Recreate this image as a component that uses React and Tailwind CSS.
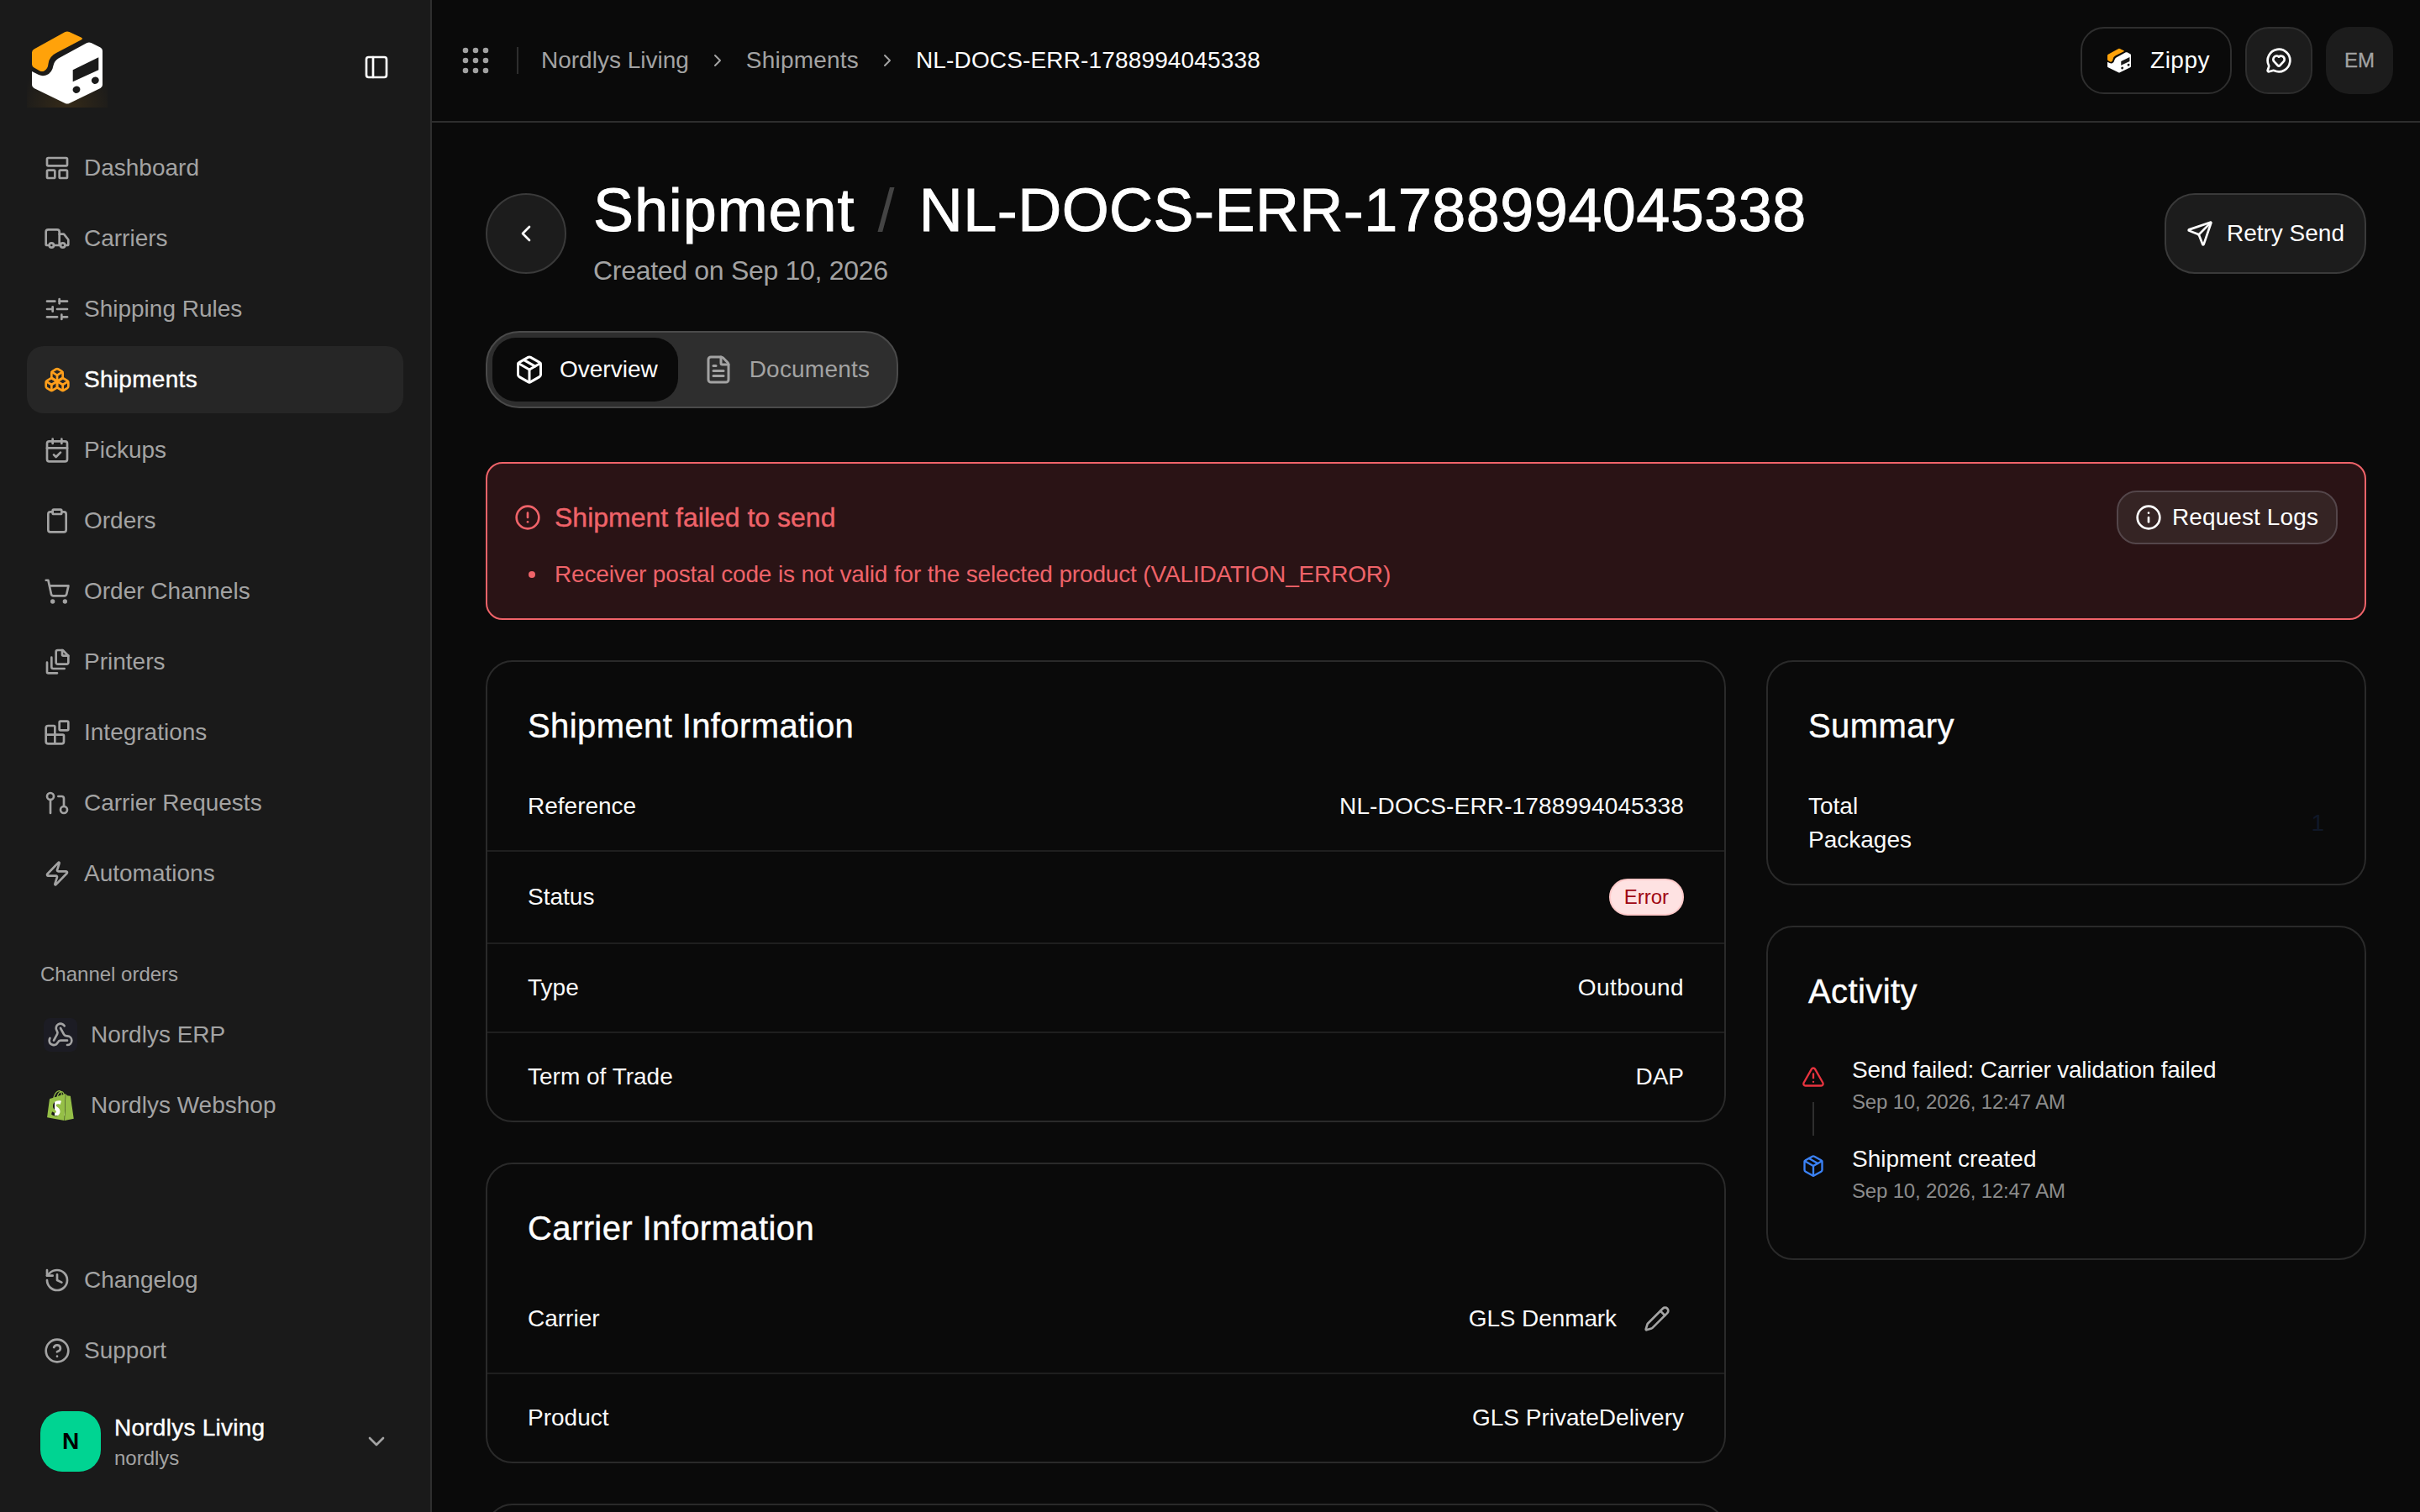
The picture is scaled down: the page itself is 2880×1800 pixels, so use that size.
import {
  LayoutPanelTop, Truck, SlidersHorizontal, Boxes, CalendarCheck, Clipboard, ShoppingCart, Blocks,
  GitPullRequest, Zap, Webhook, History, CircleHelp, ChevronDown, ChevronRight, ChevronLeft, PanelLeft,
  MessageCircleHeart, Send, Package, FileText, CircleAlert, Info, Pencil, TriangleAlert,
} from 'lucide-react';
import { SiShopify } from 'react-icons/si';

function Logo({ className, glow }) {
  return (
    <svg viewBox="0 0 96 96" className={className}>
      {glow && (
        <>
          <defs>
            <radialGradient id="logo-glow" cx="50%" cy="100%" r="60%">
              <stop offset="0%" stopColor="#ffa20a" stopOpacity="0.12" />
              <stop offset="100%" stopColor="#ffa20a" stopOpacity="0" />
            </radialGradient>
          </defs>
          <rect width="96" height="96" fill="url(#logo-glow)" />
        </>
      )}
      <path d="M8.5 26.5 L45.5 6 Q48 4.8 50.5 6 L64.5 12.5 Q67.5 14 64.5 15.5 L35 31 Q26.5 35 25.5 44 Q25 50 20.5 52.5 Q18 53.5 15.5 52.5 L8.5 48.5 Q6 47 6 44.5 L6 30.5 Q6 28 8.5 26.5 Z" fill="#ffa20a" />
      <path d="M6 53 L14 57 Q18 59 23 57.5 Q30 55 31.5 46 Q32.5 40.5 37.5 37.5 L71.5 19 Q74 17.8 76.5 19 L87.5 24.5 Q90 26 90 28.5 L90 69 Q90 71.5 87.5 73 L50.5 91 Q48 92 45.5 91 L8.5 73 Q6 71.5 6 69 Z" fill="#fff" />
      <path d="M54.7 51.3 L85.3 36.3 L85.3 51.3 L54.7 65.3 Z" fill="#1a1a1a" />
      <ellipse cx="59" cy="74.7" rx="4.5" ry="4.2" fill="#1a1a1a" transform="rotate(-25 59 74.7)" />
      <ellipse cx="81.3" cy="63.7" rx="4.5" ry="4.2" fill="#1a1a1a" transform="rotate(-25 81.3 63.7)" />
    </svg>
  );
}

function PrintersIcon({ className }) {
  return (
    <svg viewBox="0 0 24 24" fill="none" stroke="currentColor" strokeWidth="2" strokeLinecap="round" strokeLinejoin="round" className={className}>
      <path d="M11 3a1.5 1.5 0 0 1 1.5-1.5H17l5 5v6a1.5 1.5 0 0 1-1.5 1.5h-8A1.5 1.5 0 0 1 11 12.5Z" />
      <path d="M16.5 1.5v4a1 1 0 0 0 1 1H22" />
      <path d="M7 8v8.5A1.5 1.5 0 0 0 8.5 18H18.5" />
      <path d="M3 12.5v8.5a1 1 0 0 0 1 1h8" />
    </svg>
  );
}

function GridDots() {
  const pos = [4, 16, 28];
  return (
    <svg viewBox="0 0 32 32" className="h-8 w-8 text-neutral-400" fill="currentColor">
      {pos.map((y) => pos.map((x) => <circle key={`${x}-${y}`} cx={x} cy={y} r="3.3" />))}
    </svg>
  );
}

const mainNav = [
  { label: 'Dashboard', icon: LayoutPanelTop },
  { label: 'Carriers', icon: Truck },
  { label: 'Shipping Rules', icon: SlidersHorizontal },
  { label: 'Shipments', icon: Boxes, active: true },
  { label: 'Pickups', icon: CalendarCheck },
  { label: 'Orders', icon: Clipboard },
  { label: 'Order Channels', icon: ShoppingCart },
  { label: 'Printers', icon: PrintersIcon },
  { label: 'Integrations', icon: Blocks },
  { label: 'Carrier Requests', icon: GitPullRequest },
  { label: 'Automations', icon: Zap },
];

function NavItem({ item }) {
  const Icon = item.icon;
  return (
    <div className={`flex h-20 items-center gap-4 rounded-[20px] px-5 text-[28px] ${item.active ? 'bg-[#262626] tracking-[0.3px] text-white [-webkit-text-stroke:0.4px]' : 'text-[#a3a3a3]'}`}>
      <Icon className={`h-8 w-8 shrink-0 ${item.active ? 'text-[#ff9f1c] [-webkit-text-stroke:0]' : ''}`} />
      <span>{item.label}</span>
    </div>
  );
}

function Sidebar() {
  return (
    <aside className="flex h-full w-[514px] shrink-0 flex-col border-r-2 border-[#2e2e2e] bg-[#1a1a1a] px-8 pb-12 pt-8">
      <div className="flex h-24 items-center justify-between pr-4">
        <Logo className="h-24 w-24" glow />
        <PanelLeft className="h-8 w-8 text-white" />
      </div>
      <nav className="mt-8 flex flex-col gap-1">
        {mainNav.map((item) => <NavItem key={item.label} item={item} />)}
      </nav>
      <div className="mt-16 pl-4 text-[24px] leading-8 text-[#a3a3a3]">Channel orders</div>
      <div className="mt-4 flex flex-col gap-1">
        <div className="flex h-20 items-center gap-4 px-5 text-[28px] text-[#a3a3a3]">
          <div className="flex h-10 w-10 items-center justify-center rounded-lg bg-[#1c1c24]">
            <Webhook className="h-8 w-8" />
          </div>
          <span>Nordlys ERP</span>
        </div>
        <div className="flex h-20 items-center gap-4 px-5 text-[28px] text-[#a3a3a3]">
          <div className="relative flex h-10 w-10 items-center justify-center">
            <div className="absolute left-[13px] top-[14px] h-[18px] w-3 bg-white" />
            <SiShopify className="relative h-9 w-9 text-[#95bf47]" />
          </div>
          <span>Nordlys Webshop</span>
        </div>
      </div>
      <div className="mt-auto flex flex-col gap-1">
        <NavItem item={{ label: 'Changelog', icon: History }} />
        <NavItem item={{ label: 'Support', icon: CircleHelp }} />
      </div>
      <div className="mt-8 flex h-[72px] items-center pl-4 pr-4">
        <div className="flex h-[72px] w-[72px] items-center justify-center rounded-[26px] bg-[#00d492] text-[28px] font-bold text-black">N</div>
        <div className="ml-4 min-w-0 flex-1">
          <div className="text-[28px] leading-10 tracking-[0.25px] text-white [-webkit-text-stroke:0.4px]">Nordlys Living</div>
          <div className="text-[24px] leading-8 text-[#a3a3a3]">nordlys</div>
        </div>
        <ChevronDown className="h-8 w-8 text-[#a3a3a3]" />
      </div>
    </aside>
  );
}

function Topbar() {
  return (
    <header className="flex h-[146px] shrink-0 items-center border-b-2 border-[#2e2e2e] pl-[36px] pr-8">
      <GridDots />
      <div className="ml-[33px] h-8 w-0.5 bg-[#2e2e2e]" />
      <div className="ml-[27px] flex items-center gap-[22px] text-[28px] text-[#a3a3a3]">
        <span>Nordlys Living</span>
        <ChevronRight className="h-6 w-6" />
        <span className="tracking-[0.2px]">Shipments</span>
        <ChevronRight className="h-6 w-6" />
        <span className="tracking-[0.15px] text-white">NL-DOCS-ERR-1788994045338</span>
      </div>
      <div className="ml-auto flex items-center gap-4">
        <div className="flex h-20 items-center gap-[21px] rounded-[28px] border-2 border-[#2e2e2e] pl-[28px] pr-[24px] text-[28px] tracking-[0.5px] text-white">
          <Logo className="h-8 w-8" />
          <span>Zippy</span>
        </div>
        <div className="flex h-20 w-20 items-center justify-center rounded-[28px] border-2 border-[#2e2e2e] bg-[#1c1c1c]">
          <MessageCircleHeart className="h-8 w-8 text-white" />
        </div>
        <div className="flex h-20 w-20 items-center justify-center rounded-[28px] bg-[#1c1c1c] text-[24px] text-[#a3a3a3] [-webkit-text-stroke:0.3px]">EM</div>
      </div>
    </header>
  );
}

function Row({ label, children, last }) {
  return (
    <div className={`flex items-center justify-between px-12 py-8 text-[28px] leading-10 text-[#fafafa] ${last ? '' : 'border-b-2 border-[#1f1f1f]'}`}>
      <span>{label}</span>
      {children}
    </div>
  );
}

function Card({ title, children }) {
  return (
    <section className="rounded-[32px] border-2 border-[#2a2a2a] bg-[#0a0a0a]">
      {title && <h2 className="px-12 pb-4 pt-12 text-[40px] leading-14 tracking-[0.4px] text-white [-webkit-text-stroke:0.4px]">{title}</h2>}
      {children}
    </section>
  );
}

function ActivityItem({ icon, title, date, line, titleClass }) {
  return (
    <div className="flex gap-[30px]">
      <div className="-ml-[10px] flex w-8 flex-col items-center pt-[14px]">
        {icon}
        {line && <div className="mt-4 h-10 w-0.5 bg-[#2e2e2e]" />}
      </div>
      <div>
        <div className={`text-[28px] leading-10 text-[#fafafa] ${titleClass || ''}`}>{title}</div>
        <div className="mt-0.5 text-[24px] leading-8 tracking-[-0.17px] text-[#8c8c8c]">{date}</div>
      </div>
    </div>
  );
}

export default function App() {
  return (
    <div className="flex h-screen overflow-hidden bg-[#0a0a0a] font-['Liberation_Sans',Arial,sans-serif]">
      <Sidebar />
      <div className="flex min-w-0 flex-1 flex-col">
        <Topbar />
        <main className="min-h-0 flex-1 overflow-hidden px-16 pt-16">
          <div className="flex items-center">
            <div className="flex h-24 w-24 items-center justify-center rounded-full border-2 border-[#3a3a3a] bg-[#1c1c1c]">
              <ChevronLeft className="h-8 w-8 text-white" />
            </div>
            <div className="ml-8">
              <h1 className="flex items-center text-[72px] leading-20 tracking-[0.45px] text-white [-webkit-text-stroke:0.9px]">
                <span className="tracking-[0.9px]">Shipment</span>
                <span className="ml-[27px] mr-[29px] text-[#444] [-webkit-text-stroke:0]">/</span>
                NL-DOCS-ERR-1788994045338
              </h1>
              <p className="mt-2 text-[32px] leading-12 tracking-[-0.3px] text-[#a3a3a3]">Created on Sep 10, 2026</p>
            </div>
            <button className="ml-auto flex h-24 items-center gap-4 rounded-[36px] border-2 border-[#3a3a3a] bg-[#1c1c1c] px-6 text-[28px] text-white">
              <Send className="h-8 w-8" />
              Retry Send
            </button>
          </div>

          <div className="mt-12 inline-flex h-[92px] items-center gap-2 rounded-[40px] border-2 border-[#4a4a4a] bg-[#2e2e2e] p-1.5">
            <div className="flex h-[76px] items-center gap-[18px] rounded-[28px] bg-[#0a0a0a] pl-[26px] pr-6 text-[28px] text-white">
              <Package className="h-9 w-9" />
              Overview
            </div>
            <div className="flex h-[76px] items-center gap-[19px] pl-[22px] pr-[26px] text-[28px] tracking-[0.2px] text-[#a3a3a3]">
              <FileText className="h-9 w-9" />
              Documents
            </div>
          </div>

          <div className="mt-16 rounded-[20px] border-2 border-[#ef6369] bg-[#2a1315] p-8 text-[#ef6369]">
            <div className="flex h-16 items-center justify-between">
              <div className="flex items-center gap-4 text-[32px] [-webkit-text-stroke:0.4px]">
                <CircleAlert className="h-8 w-8 [-webkit-text-stroke:0]" />
                Shipment failed to send
              </div>
              <button className="flex h-16 items-center gap-3 rounded-[24px] border-2 border-[#54464a] bg-[#352424] pl-5 pr-[21px] text-[28px] tracking-[0.1px] text-white">
                <Info className="h-8 w-8" />
                Request Logs
              </button>
            </div>
            <ul className="mt-4 pl-[17px] text-[28px] leading-10 tracking-[-0.16px]">
              <li className="flex items-center gap-[23px]">
                <span className="h-2 w-2 rounded-full bg-[#ef6369]" />
                Receiver postal code is not valid for the selected product (VALIDATION_ERROR)
              </li>
            </ul>
          </div>

          <div className="mt-12 grid grid-cols-3 gap-12">
            <div className="col-span-2 flex flex-col gap-12">
              <Card title="Shipment Information">
                <Row label="Reference">
                  <span className="tracking-[0.15px]">NL-DOCS-ERR-1788994045338</span>
                </Row>
                <div className="flex items-center justify-between border-b-2 border-[#1f1f1f] px-12 py-8 text-[28px] leading-10 text-[#fafafa]">
                  <span>Status</span>
                  <span className="rounded-full border-2 border-[#ffc9c9] bg-[#fee2e2] px-4 text-[24px] leading-10 text-[#9f0712]">Error</span>
                </div>
                <Row label="Type"><span className="tracking-[0.4px]">Outbound</span></Row>
                <Row label="Term of Trade" last><span>DAP</span></Row>
              </Card>
              <Card title="Carrier Information">
                <div className="flex items-center justify-between border-b-2 border-[#1f1f1f] px-12 py-8 text-[28px] text-[#fafafa]">
                  <span>Carrier</span>
                  <div className="flex items-center gap-4">
                    <span className="tracking-[-0.1px]">GLS Denmark</span>
                    <div className="flex h-16 w-16 items-center justify-center text-[#a3a3a3]">
                      <Pencil className="h-8 w-8" />
                    </div>
                  </div>
                </div>
                <Row label="Product" last><span>GLS PrivateDelivery</span></Row>
              </Card>
              <Card><div className="h-40" /></Card>
            </div>

            <div className="flex flex-col gap-12">
              <Card title="Summary">
                <div className="flex items-center justify-between px-12 py-8 text-[28px] leading-10 text-[#fafafa]">
                  <span className="w-[130px]">Total Packages</span>
                  <span className="text-gray-900">1</span>
                </div>
              </Card>
              <Card title="Activity">
                <div className="flex flex-col gap-2 px-12 pb-[64px] pt-[30px]">
                  <ActivityItem
                    line
                    titleClass="tracking-[-0.23px]"
                    icon={<TriangleAlert className="h-7 w-7 text-[#e7343f]" />}
                    title="Send failed: Carrier validation failed"
                    date="Sep 10, 2026, 12:47 AM"
                  />
                  <ActivityItem
                    icon={<Package className="h-7 w-7 text-[#3b82f6]" />}
                    title="Shipment created"
                    date="Sep 10, 2026, 12:47 AM"
                  />
                </div>
              </Card>
            </div>
          </div>
        </main>
      </div>
    </div>
  );
}
